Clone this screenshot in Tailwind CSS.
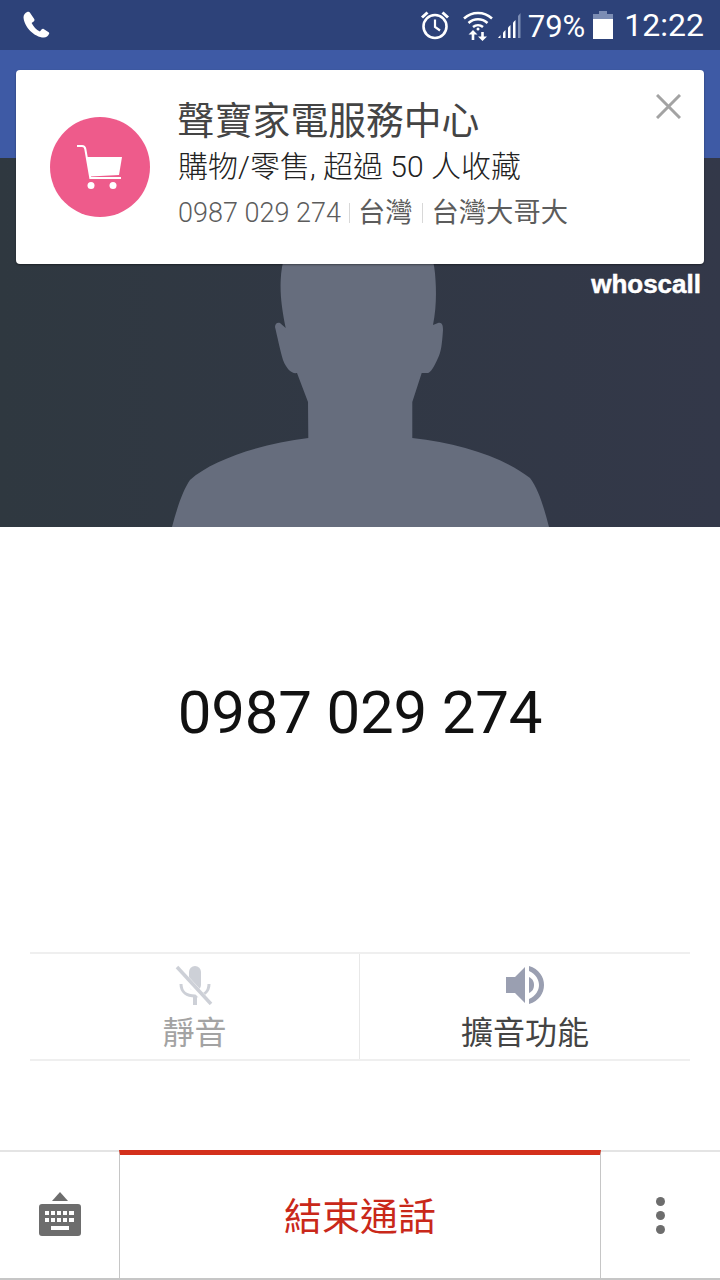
<!DOCTYPE html>
<html lang="zh-Hant">
<head>
  <meta charset="UTF-8" />
  <meta name="viewport" content="width=device-width, initial-scale=1.0" />
  <title>來電</title>
  <script src="https://cdn.jsdelivr.net/npm/@tailwindcss/browser@4"></script>
</head>
<body class="bg-white font-['Roboto','Noto_Sans_CJK_TC',sans-serif]">
  <div class="relative w-[720px] h-[1280px] overflow-hidden flex flex-col bg-white">

    <!-- status bar -->
    <div class="h-[50px] bg-[#2d4279] flex items-center pl-[21px] pr-[16px] text-white">
      <svg class="w-[30px] h-[30px]" viewBox="0 0 24 24" fill="#fff"><path d="M5 1.500c-1.600.6-3 2.200-3 4.200C2.600 13.800 10.500 21.500 18.300 22c1.900 0 3.500-1.300 4.200-3 .2-.5 0-1-.4-1.300l-4-2.600c-.5-.3-1.100-.2-1.500.3l-1.500 1.800c-2.900-1.400-5.200-3.900-6.600-6.800l1.900-1.500c.4-.4.5-1 .3-1.500L7.200 2.200C6.800 1.600 5.700 1.200 5 1.500z"/></svg>
      <div class="ml-auto flex items-center">
        <svg class="w-[32px] h-[32px] mr-[2px]" viewBox="0 0 32 32" fill="none" stroke="#fff" stroke-width="2.600"><circle cx="16" cy="17.500" r="11.500"/><path d="M16 10.500v7.500l5 3.500" stroke-width="2.200"/><path d="M3 8.500 8.500 3.500M29 8.500 23.500 3.500" stroke-width="3"/></svg>
        <svg class="ml-[9px] w-[32px] h-[32px]" viewBox="0 0 32 32" fill="none" stroke="#fff" stroke-width="2.500"><path d="M2 9.500c8-7.500 20-7.500 28 0M6.500 14c5.500-5 13.500-5 19 0M11 18c3-2.500 7-2.500 10 0"/><circle cx="16" cy="20" r="1.500" fill="#fff" stroke="none"/><path d="M11 31v-7M20.500 23v7" stroke-width="2.600"/><path d="M6.500 25.500 11 21l4.500 4.500zM16 27.500 20.500 32l4.500-4.500z" fill="#fff" stroke="none"/></svg>
        <svg class="ml-[3px] w-[27px] h-[30px]" viewBox="0 0 27 30"><path d="M1 28h2.500v-3z" fill="#fff"/><path d="M6 28h2.500v-8L6 22.500z" fill="#fff"/><path d="M11 28h2.500V15L11 17.500z" fill="#fff"/><path d="M16 28h2.500V10L16 12.500z" fill="#fff"/><path d="M21 28h2.500V3L21 6z" fill="#7c8db4"/></svg>
        <span class="ml-[4px] text-[31px] leading-[50px] mt-[3px]">79%</span>
        <svg class="ml-[8px] w-[20px] h-[28px]" viewBox="0 0 20 28"><path d="M6 0h8v3h6v5H0V3h6z" fill="#7c8db4"/><path d="M0 8h20v20H0z" fill="#fff"/></svg>
        <span class="ml-[11px] text-[32px] leading-[50px]">12:22</span>
      </div>
    </div>

    <div class="h-[108px] bg-[#3e5aa5]"></div>

    <!-- caller photo -->
    <div class="h-[369px] bg-linear-to-r from-[#2f3840] to-[#333849] flex justify-center items-end">
      <svg class="w-[720px] h-[369px]" viewBox="0 158 720 369" fill="#666d7d">
        <path d="M172 527C177 508 183 490 190 480C212 460 260 444 308.300 438L308 402L297 373C292 374 287 370 283 360C280 350 277 335 275 327C275 323 278 322 280 323L285.700 328C282 310 280 295 280.700 280C282 240 310 200 360 200C410 200 434 240 435.500 280C436.500 295 436 310 433 325L438 323C442 322 443 325 443 330C442 345 441 352 438 358C434 367 431 372 428 373L421.700 373L412.300 402L412.300 438C460 443 505 458 530 478C539 490 544 508 549 527Z"/>
      </svg>
    </div>

    <!-- number -->
    <div class="h-[425px] pt-[150px] text-center text-[60px] leading-[72px] tracking-[-0.2px] text-[#111]">0987 029 274</div>

    <!-- call controls -->
    <div class="mx-[30px] h-[109px] border-y-2 border-[#efefef] grid grid-cols-2">
      <div class="border-r border-[#e8e8e8] flex flex-col items-center pt-[11px]">
        <svg class="w-[40px] h-[40px]" viewBox="0 0 40 40" fill="none" stroke="#cdd0d7"><rect x="14" y="1" width="12" height="25" rx="6" fill="#cdd0d7" stroke="none"/><path d="M6 19c0 8 6 12 14 12s14-4 14-12" stroke-width="3"/><path d="M20 31v9" stroke-width="4"/><path d="M1 3 35 40" stroke="#fff" stroke-width="7"/><path d="M2 2 36 39" stroke-width="3.500"/></svg>
        <span class="mt-[6px] text-[32px] leading-[44px] text-[#a3a3a3]">靜音</span>
      </div>
      <div class="flex flex-col items-center pt-[11px]">
        <svg class="w-[40px] h-[40px]" viewBox="0 0 40 40" fill="#9a9fb1"><path d="M1 12h9L20 2v36L10 28H1z"/><path d="M24 12c4 2 5 5 5 8s-1 6-5 8z"/><path d="M24 1c10 3 15 11 15 19s-5 16-15 19v-5c7-3 10-9 10-14s-3-11-10-14z"/></svg>
        <span class="mt-[6px] text-[32px] leading-[44px] text-[#444]">擴音功能</span>
      </div>
    </div>

    <div class="h-[89px]"></div>

    <!-- bottom bar -->
    <div class="flex-1 grid grid-cols-[119px_482px_119px] border-t-2 border-[#e4e4e4] border-b-2 border-b-[#c6c6c6]">
      <div class="flex items-center justify-center">
        <svg class="w-[42px] h-[44px] mt-[-2px]" viewBox="0 0 42 44" fill="#6d6d6d"><path d="M13 9 21 0l8 9z"/><path fill-rule="evenodd" d="M3 12h36a3 3 0 0 1 3 3v26a3 3 0 0 1-3 3H3a3 3 0 0 1-3-3V15a3 3 0 0 1 3-3zM6 19v4h4v-4zm6 0v4h4v-4zm6 0v4h4v-4zm6 0v4h4v-4zm6 0v4h5v-4zM6 26v4h4v-4zm6 0v4h4v-4zm6 0v4h4v-4zm6 0v4h4v-4zm6 0v4h5v-4zM12 34v4h18v-4z"/></svg>
      </div>
      <div class="border-x border-[#c6c6c6] border-t-[5px] border-t-[#d4301c] mt-[-2px] flex items-center justify-center">
        <span class="text-[38px] leading-[50px] text-[#c9281a]">結束通話</span>
      </div>
      <div class="flex flex-col items-center justify-center gap-[5px]">
        <span class="w-[9px] h-[9px] rounded-full bg-[#6d6d6d]"></span>
        <span class="w-[9px] h-[9px] rounded-full bg-[#6d6d6d]"></span>
        <span class="w-[9px] h-[9px] rounded-full bg-[#6d6d6d]"></span>
      </div>
    </div>

    <!-- caller id overlay -->
    <div class="absolute left-[16px] top-[70px] w-[688px] h-[194px] bg-white rounded-[4px] shadow-[0_1px_2px_rgba(0,0,0,0.4)] flex items-center pl-[34px]">
      <div class="w-[100px] h-[100px] rounded-full bg-[#ee5b8b] shrink-0 mt-[-1px]">
        <svg class="w-[100px] h-[100px]" viewBox="0 0 100 100" fill="none"><path d="M27 29h5c2 0 3 1 3.300 3l5 29H71" stroke="#fff" stroke-width="2"/><path d="M37 40h35l-3 18-29 1.500z" fill="#fff"/><circle cx="41" cy="68.500" r="3.500" fill="#fff"/><circle cx="63" cy="68.500" r="3.500" fill="#fff"/></svg>
      </div>
      <div class="ml-[28px] flex flex-col">
        <div class="text-[37.800px] leading-[48px] text-[#444] ml-[-1px]">聲寶家電服務中心</div>
        <div class="text-[30px] leading-[44px] text-[#222] font-light">購物/零售, 超過 50 人收藏</div>
        <div class="flex items-center text-[27.300px] leading-[48px] text-[#5c5c5c]">
          <span class="text-[27px] font-light">0987 029 274</span>
          <span class="mx-[8px] w-px h-[20px] bg-[#d8d8d8]"></span>
          <span>台灣</span>
          <span class="mx-[9px] w-px h-[20px] bg-[#d8d8d8]"></span>
          <span>台灣大哥大</span>
        </div>
      </div>
      <svg class="absolute right-[23px] top-[24px] w-[25px] h-[25px]" viewBox="0 0 25 25" stroke="#a3a3a3" stroke-width="3"><path d="M1 1 24 24M24 1 1 24"/></svg>
    </div>

    <span class="absolute right-[19px] top-[268px] text-[26px] leading-[32px] font-bold text-white font-['Liberation_Sans',sans-serif] [-webkit-text-stroke:0.5px_white]">whoscall</span>
  </div>
</body>
</html>
